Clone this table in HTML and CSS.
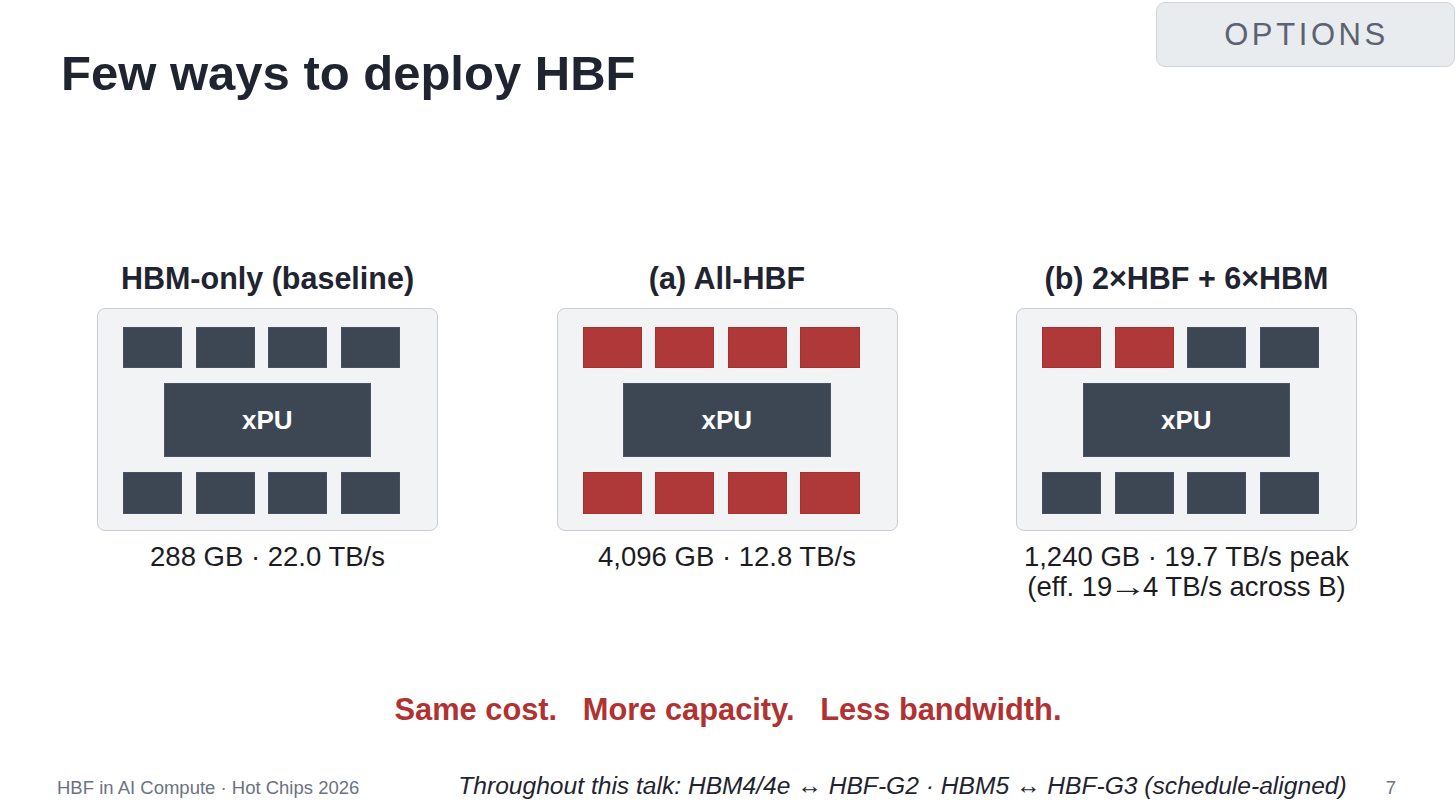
FILE: index.html
```html
<!DOCTYPE html>
<html lang="en">
<head>
<meta charset="utf-8">
<title>Few ways to deploy HBF</title>
<link rel="stylesheet" href="styles.css">
</head>
<body>
<div class="slide">
  <header class="header">
    <h1 class="title">Few ways to deploy HBF</h1>
    <div class="badge">OPTIONS</div>
  </header>

  <section class="options">
    <div class="option">
      <h2 class="option-title">HBM-only (baseline)</h2>
      <div class="package">
        <div class="stack-row">
          <div class="stack hbm"></div><div class="stack hbm"></div><div class="stack hbm"></div><div class="stack hbm"></div>
        </div>
        <div class="xpu">xPU</div>
        <div class="stack-row">
          <div class="stack hbm"></div><div class="stack hbm"></div><div class="stack hbm"></div><div class="stack hbm"></div>
        </div>
      </div>
      <p class="caption">288 GB · 22.0 TB/s</p>
    </div>

    <div class="option">
      <h2 class="option-title">(a) All-HBF</h2>
      <div class="package">
        <div class="stack-row">
          <div class="stack hbf"></div><div class="stack hbf"></div><div class="stack hbf"></div><div class="stack hbf"></div>
        </div>
        <div class="xpu">xPU</div>
        <div class="stack-row">
          <div class="stack hbf"></div><div class="stack hbf"></div><div class="stack hbf"></div><div class="stack hbf"></div>
        </div>
      </div>
      <p class="caption">4,096 GB · 12.8 TB/s</p>
    </div>

    <div class="option">
      <h2 class="option-title">(b) 2×HBF + 6×HBM</h2>
      <div class="package">
        <div class="stack-row">
          <div class="stack hbf"></div><div class="stack hbf"></div><div class="stack hbm"></div><div class="stack hbm"></div>
        </div>
        <div class="xpu">xPU</div>
        <div class="stack-row">
          <div class="stack hbm"></div><div class="stack hbm"></div><div class="stack hbm"></div><div class="stack hbm"></div>
        </div>
      </div>
      <p class="caption">1,240 GB · 19.7 TB/s peak<br>(eff. 19<span class="arrow">→</span>4 TB/s across B)</p>
    </div>
  </section>

  <p class="tagline">Same cost.   More capacity.   Less bandwidth.</p>

  <footer class="footer">
    <span class="footer-left">HBF in AI Compute · Hot Chips 2026</span>
    <span class="footer-right">
      <em class="footer-note">Throughout this talk: HBM4/4e ↔ HBF-G2 · HBM5 ↔ HBF-G3 (schedule-aligned)</em>
      <span class="page-num">7</span>
    </span>
  </footer>
</div>
</body>
</html>
```

FILE: styles.css
```css
* { box-sizing: border-box; }

html, body {
  margin: 0;
  padding: 0;
  background: #ffffff;
}

body {
  font-family: "Liberation Sans", Arial, sans-serif;
  color: #1f2430;
}

.slide {
  width: 1456px;
  height: 812px;
  display: flex;
  flex-direction: column;
  overflow: hidden;
}

.header {
  display: flex;
  justify-content: space-between;
  align-items: flex-start;
  padding-left: 61px;
  padding-right: 1px;
}

.title {
  margin: 45px 0 0 0;
  font-size: 49px;
  line-height: 56px;
  font-weight: 700;
  color: #1f2430;
}

.badge {
  margin-top: 2px;
  width: 299px;
  height: 65px;
  display: flex;
  align-items: center;
  justify-content: center;
  background: #e9ecef;
  border: 1px solid #cfd4da;
  border-radius: 9px;
  font-size: 31px;
  letter-spacing: 3.6px;
  padding-left: 2px;
  color: #5b6370;
}

.options {
  display: flex;
  gap: 118.5px;
  padding-left: 97px;
  margin-top: 160px;
  align-items: flex-start;
}

.option {
  width: 341px;
  display: flex;
  flex-direction: column;
  align-items: center;
}

.option-title {
  margin: 0 0 13px 0;
  font-size: 30.5px;
  line-height: 34px;
  font-weight: 700;
  color: #1f2430;
  white-space: nowrap;
}

.package {
  width: 341px;
  height: 223px;
  background: #f2f3f5;
  border: 1px solid #c8ccd3;
  border-radius: 8px;
  padding: 17.5px 0 0 25px;
  display: flex;
  flex-direction: column;
  align-items: flex-start;
  gap: 15px;
}

.stack-row {
  display: flex;
  gap: 13.3px;
}

.stack {
  width: 59.3px;
  height: 41.5px;
}

.hbm {
  background: #3d4653;
  border: 1px solid #46505e;
}

.hbf {
  background: #af3838;
  border: 1px solid #a93030;
}

.xpu {
  margin-left: 40.5px;
  width: 207.5px;
  height: 74px;
  background: #3d4653;
  border: 1px solid #4a5462;
  display: flex;
  align-items: center;
  justify-content: center;
  color: #ffffff;
  font-size: 26px;
  font-weight: 700;
}

.caption {
  margin: 10.5px 0 0 0;
  font-size: 27.5px;
  line-height: 30px;
  text-align: center;
  color: #1c1c1f;
  white-space: nowrap;
}

.arrow {
  display: inline-block;
  transform: scaleX(1.35);
  margin: 0 1.5px;
}

.tagline {
  margin: 91px 0 0 0;
  text-align: center;
  font-size: 30.8px;
  line-height: 34px;
  font-weight: 700;
  color: #b03232;
  white-space: pre;
}

.footer {
  margin-top: 45.5px;
  display: flex;
  justify-content: space-between;
  align-items: baseline;
  padding: 0 60px 0 57px;
}

.footer-left {
  font-size: 18.5px;
  line-height: 22px;
  color: #6b7280;
}

.footer-right {
  display: flex;
  align-items: baseline;
}

.footer-note {
  font-style: italic;
  font-size: 24.6px;
  line-height: 28px;
  color: #1f2430;
}

.page-num {
  margin-left: 39px;
  font-size: 18.5px;
  line-height: 22px;
  color: #6b7280;
}
```
